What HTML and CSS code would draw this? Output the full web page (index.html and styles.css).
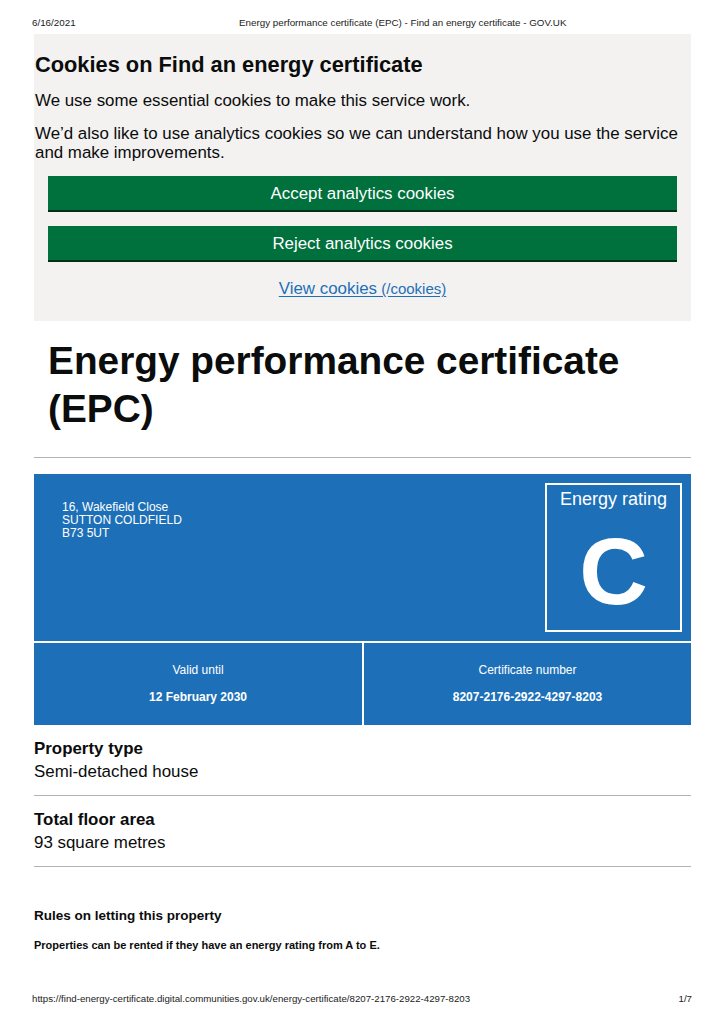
FILE: index.html
```html
<!DOCTYPE html>
<html lang="en">
<head>
<meta charset="utf-8">
<title>Energy performance certificate (EPC) - Find an energy certificate - GOV.UK</title>
<link rel="stylesheet" href="styles.css">
</head>
<body>
<div class="page">
  <header class="print-header">
    <span class="print-date">6/16/2021</span>
    <span class="print-title">Energy performance certificate (EPC) - Find an energy certificate - GOV.UK</span>
  </header>

  <main class="main">
    <section class="cookie-banner">
      <h2 class="cookie-heading">Cookies on Find an energy certificate</h2>
      <p class="cookie-text">We use some essential cookies to make this service work.</p>
      <p class="cookie-text">We’d also like to use analytics cookies so we can understand how you use the service and make improvements.</p>
      <div class="cookie-actions">
        <button class="btn" type="button">Accept analytics cookies</button>
        <button class="btn" type="button">Reject analytics cookies</button>
        <a class="cookie-link" href="/cookies">View cookies<span class="link-href"> (/cookies)</span></a>
      </div>
    </section>

    <h1 class="page-title">Energy performance certificate (EPC)</h1>
    <hr class="rule">

    <section class="epc-card">
      <div class="epc-top">
        <p class="address">16, Wakefield Close<br>SUTTON COLDFIELD<br>B73 5UT</p>
        <div class="rating-box">
          <span class="rating-label">Energy rating</span>
          <span class="rating-letter">C</span>
        </div>
      </div>
      <div class="epc-bottom">
        <div class="epc-cell">
          <span class="cell-label">Valid until</span>
          <span class="cell-value">12 February 2030</span>
        </div>
        <div class="epc-cell">
          <span class="cell-label">Certificate number</span>
          <span class="cell-value">8207-2176-2922-4297-8203</span>
        </div>
      </div>
    </section>

    <dl class="facts">
      <div class="fact">
        <dt class="fact-key">Property type</dt>
        <dd class="fact-value">Semi-detached house</dd>
      </div>
      <div class="fact">
        <dt class="fact-key">Total floor area</dt>
        <dd class="fact-value">93 square metres</dd>
      </div>
    </dl>

    <h3 class="rules-heading">Rules on letting this property</h3>
    <p class="rules-text">Properties can be rented if they have an energy rating from A to E.</p>
  </main>

  <footer class="print-footer">
    <span>https://find-energy-certificate.digital.communities.gov.uk/energy-certificate/8207-2176-2922-4297-8203</span>
    <span>1/7</span>
  </footer>
</div>
</body>
</html>
```

FILE: styles.css
```css
* { box-sizing: border-box; }

html, body {
  margin: 0;
  padding: 0;
  background: #ffffff;
}

body {
  font-family: "Liberation Sans", Arial, sans-serif;
  color: #0b0c0c;
}

.page {
  height: 1024px;
  display: flex;
  flex-direction: column;
  overflow: hidden;
}

.print-header {
  display: grid;
  grid-template-columns: 207px 1fr;
  padding: 17px 32px 0;
  height: 34px;
  font-size: 9.8px;
  line-height: 12px;
  color: #222;
}

.main {
  margin: 0 34px;
}

/* Cookie banner */
.cookie-banner {
  background: #f3f2f1;
  padding: 17.5px 1px 22px;
}

.cookie-heading {
  margin: 0 0 14px;
  font-size: 21.8px;
  line-height: 25px;
  font-weight: 700;
}

.cookie-text {
  margin: 0 0 14px;
  font-size: 16.9px;
  line-height: 19.3px;
}

.cookie-actions {
  display: flex;
  flex-direction: column;
  align-items: stretch;
  padding: 0 13px;
}

.btn {
  display: block;
  width: 100%;
  margin: 0 0 16px;
  padding: 8px 10px 6px;
  border: 0;
  background: #00703c;
  box-shadow: 0 2px 0 #002d18;
  color: #ffffff;
  font-family: inherit;
  font-size: 16.9px;
  line-height: 20px;
  text-align: center;
}

.cookie-link {
  align-self: center;
  margin-top: 3px;
  color: #1d70b8;
  font-size: 16.9px;
  line-height: 19.3px;
  text-decoration: underline;
  text-underline-offset: 2px;
}

.link-href {
  font-size: 15px;
}

/* Title */
.page-title {
  margin: 16px 0 24px;
  padding: 0 14px;
  font-size: 38.8px;
  line-height: 48px;
  font-weight: 700;
}

.rule {
  margin: 0;
  border: 0;
  border-top: 1px solid #b1b4b6;
  height: 0;
}

/* EPC card */
.epc-card {
  margin-top: 16px;
  display: flex;
  flex-direction: column;
  gap: 2px;
  background: #ffffff;
  color: #ffffff;
}

.epc-top {
  background: #1d70b8;
  display: grid;
  grid-template-columns: 1fr auto;
  align-items: start;
}

.address {
  margin: 0;
  padding: 27.5px 0 0 28px;
  font-size: 12px;
  line-height: 13px;
}

.rating-box {
  margin: 9px;
  width: 137px;
  height: 149px;
  border: 2px solid #ffffff;
  display: flex;
  flex-direction: column;
  align-items: center;
  padding-top: 4px;
}

.rating-label {
  font-size: 18px;
  line-height: 21px;
}

.rating-letter {
  margin-top: 14px;
  font-size: 95px;
  line-height: 95px;
  font-weight: 700;
}

.epc-bottom {
  display: grid;
  grid-template-columns: 328px 1fr;
  gap: 2px;
}

.epc-cell {
  background: #1d70b8;
  display: flex;
  flex-direction: column;
  align-items: center;
  gap: 13px;
  padding: 20px 0 21px;
  font-size: 12px;
  line-height: 14px;
}

.cell-value {
  font-weight: 700;
}

/* Facts */
.facts {
  margin: 14.5px 0 0;
}

.fact {
  padding-bottom: 14px;
  border-bottom: 1px solid #b1b4b6;
  margin-bottom: 13.5px;
}

.fact-key {
  margin: 0 0 3.7px;
  font-size: 16.9px;
  line-height: 19.3px;
  font-weight: 700;
}

.fact-value {
  margin: 0;
  font-size: 16.9px;
  line-height: 19.3px;
}

.rules-heading {
  margin: 41px 0 15px;
  font-size: 13.5px;
  line-height: 15.5px;
  font-weight: 700;
}

.rules-text {
  margin: 0;
  font-size: 11px;
  line-height: 12.6px;
  font-weight: 700;
}

/* Print footer */
.print-footer {
  margin-top: auto;
  display: flex;
  justify-content: space-between;
  padding: 0 33px 19px 32px;
  font-size: 9.7px;
  line-height: 12px;
  color: #222;
}
```
